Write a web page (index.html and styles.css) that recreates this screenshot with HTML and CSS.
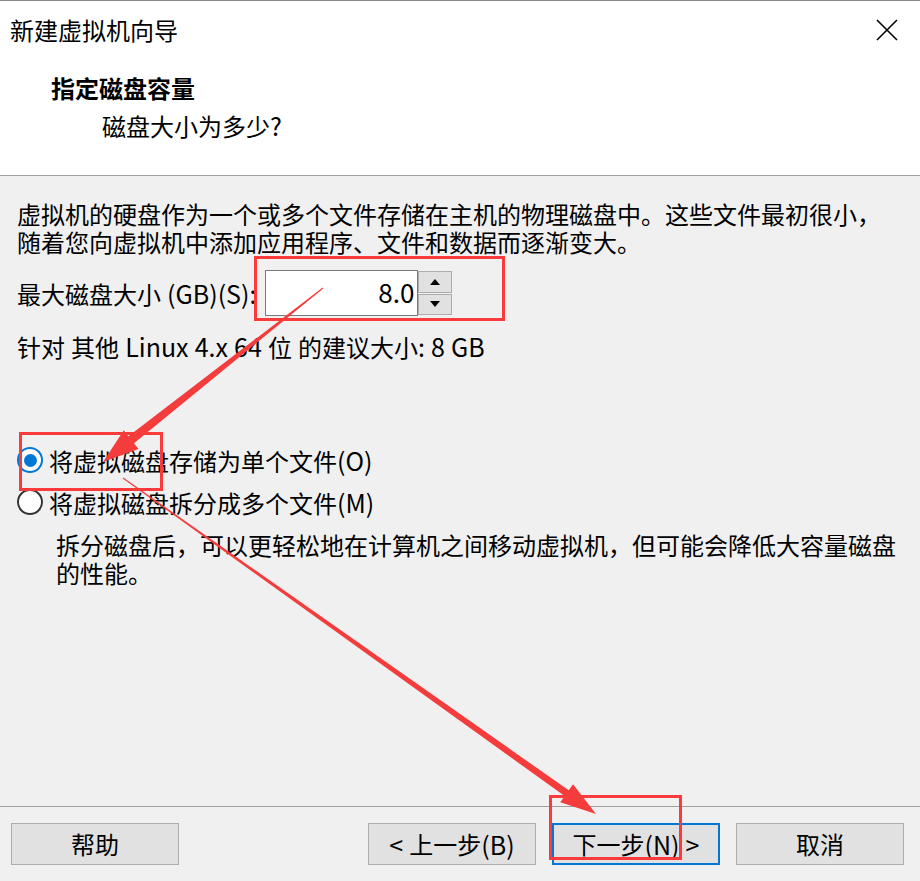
FILE: index.html
```html
<!DOCTYPE html>
<html lang="zh-CN">
<head>
<meta charset="utf-8">
<title>新建虚拟机向导</title>
<link rel="stylesheet" href="styles.css">
</head>
<body>
<div class="dialog">
  <header class="header">
    <div class="titlebar">
      <span class="title">新建虚拟机向导</span>
      <svg class="close" width="22" height="22" viewBox="0 0 22 22"><path d="M1 1 L21 21 M21 1 L1 21" stroke="#000" stroke-width="1.6" fill="none"/></svg>
    </div>
    <div class="heading">指定磁盘容量</div>
    <div class="subheading">磁盘大小为多少<span class="latin">?</span></div>
  </header>

  <main class="content">
    <p class="intro">虚拟机的硬盘作为一个或多个文件存储在主机的物理磁盘中。这些文件最初很小，<br>随着您向虚拟机中添加应用程序、文件和数据而逐渐变大。</p>

    <div class="size-row">
      <span class="label">最大磁盘大小<span class="latin"> (GB)(S):</span></span>
      <div class="spinbox">
        <div class="spin-input"><span class="latin">8.0</span></div>
        <div class="spin-buttons">
          <div class="spin-btn"><span class="tri-up"></span></div>
          <div class="spin-btn"><span class="tri-down"></span></div>
        </div>
      </div>
    </div>

    <p class="recommend">针对<span class="latin"> </span>其他<span class="latin"> Linux 4.x 64 </span>位<span class="latin"> </span>的建议大小<span class="latin">: 8 GB</span></p>

    <div class="radios">
      <div class="radio-row first">
        <span class="radio checked"></span>
        <span class="radio-label">将虚拟磁盘存储为单个文件<span class="latin">(O)</span></span>
      </div>
      <div class="radio-row second">
        <span class="radio"></span>
        <span class="radio-label">将虚拟磁盘拆分成多个文件<span class="latin">(M)</span></span>
      </div>
      <p class="desc">拆分磁盘后，可以更轻松地在计算机之间移动虚拟机，但可能会降低大容量磁盘<br>的性能。</p>
    </div>
  </main>

  <footer class="footer">
    <div class="btn">帮助</div>
    <div class="btn-group">
      <div class="btn"><span class="latin">&lt; </span>上一步<span class="latin">(B)</span></div>
      <div class="btn default">下一步<span class="latin">(N) &gt;</span></div>
      <div class="btn">取消</div>
    </div>
  </footer>

  <svg class="annotations" width="920" height="881" viewBox="0 0 920 881">
    <g fill="none" stroke="#fb3b3b" stroke-width="3">
      <rect x="255.5" y="257.5" width="248" height="62"/>
      <rect x="20.5" y="433.5" width="141" height="56"/>
      <rect x="550.5" y="796.5" width="130" height="62"/>
    </g>
    <g fill="#f43c3c">
      <polygon points="322.7,287.6 128.4,436.2 123.8,430.3 103,462 138.6,449.1 134.0,443.2 323.3,288.4"/>
      <polygon points="123.3,477.6 568.7,790.3 573.1,784.2 596,814 560.3,802.2 564.7,796.1 122.7,478.4"/>
    </g>
  </svg>
</div>
</body>
</html>
```

FILE: styles.css
```css
* { box-sizing: border-box; }

html, body {
  margin: 0;
  padding: 0;
  background: #f0f0f0;
}

body {
  font-family: "Noto Sans CJK SC", "Noto Sans", sans-serif;
  font-size: 24px;
  line-height: 28px;
  color: #000;
}

.latin {
  font-size: 25px;
  word-spacing: 0.5px;
}

.dialog {
  position: relative;
  width: 920px;
  height: 881px;
  display: flex;
  flex-direction: column;
  overflow: hidden;
}

/* ---------- header ---------- */
.header {
  height: 176px;
  background: #fff;
  border-top: 1px solid #8a8a8a;
  border-bottom: 1px solid #a0a0a0;
  flex: none;
}

.titlebar {
  height: 57px;
  display: flex;
  align-items: center;
  justify-content: space-between;
  padding: 0 22px 0 10px;
}

.title {
  font-size: 24px;
}

.close {
  display: block;
}

.heading {
  margin-top: 16px;
  padding-left: 51px;
  font-weight: bold;
}

.subheading {
  margin-top: 9px;
  padding-left: 102px;
}

/* ---------- content ---------- */
.content {
  flex: 1;
  padding: 24px 17px 0 17px;
}

.intro {
  margin: 0;
}

.size-row {
  margin-top: 14px;
  height: 46px;
  display: flex;
  align-items: center;
}

.label {
  white-space: nowrap;
}

.spinbox {
  margin-left: 9px;
  display: flex;
  height: 46px;
}

.spin-input {
  width: 153px;
  height: 46px;
  background: #fff;
  border: 1px solid #7a7a7a;
  text-align: right;
  padding: 7px 3px 0 0;
}

.spin-input .latin {
  font-size: 26px;
}

.spin-buttons {
  width: 34px;
  display: flex;
  flex-direction: column;
  gap: 1px;
  padding: 1px 0;
}

.spin-btn {
  flex: 1;
  background: #e1e1e1;
  border: 1px solid #adadad;
  display: flex;
  align-items: center;
  justify-content: center;
}

.tri-up {
  width: 0;
  height: 0;
  border-left: 5px solid transparent;
  border-right: 5px solid transparent;
  border-bottom: 6px solid #000;
}

.tri-down {
  width: 0;
  height: 0;
  border-left: 5px solid transparent;
  border-right: 5px solid transparent;
  border-top: 6px solid #000;
}

.recommend {
  margin: 16px 0 0 0;
}

.radios {
  margin-top: 85px;
}

.radio-row {
  display: flex;
  align-items: center;
  height: 28px;
}

.radio-row.second {
  margin-top: 14px;
}

.radio {
  width: 26px;
  height: 26px;
  border-radius: 50%;
  border: 2px solid #333;
  background: #fff;
  margin-right: 6px;
  flex: none;
  display: flex;
  align-items: center;
  justify-content: center;
}

.radio.checked {
  border-color: #0078d7;
}

.radio.checked::after {
  content: "";
  width: 13px;
  height: 13px;
  border-radius: 50%;
  background: #0078d7;
}

.desc {
  margin: 15px 0 0 39px;
}

/* ---------- footer ---------- */
.footer {
  flex: none;
  height: 75px;
  border-top: 1px solid #a0a0a0;
  display: flex;
  justify-content: space-between;
  padding: 16px 16px 16px 11px;
}

.btn-group {
  display: flex;
  gap: 16px;
}

.btn {
  width: 168px;
  height: 42px;
  background: #e1e1e1;
  border: 1px solid #adadad;
  display: flex;
  align-items: center;
  justify-content: center;
  white-space: pre;
}

.btn.default {
  border: 2px solid #0078d7;
}

/* ---------- annotation overlay ---------- */
.annotations {
  position: absolute;
  left: 0;
  top: 0;
  pointer-events: none;
}
```
